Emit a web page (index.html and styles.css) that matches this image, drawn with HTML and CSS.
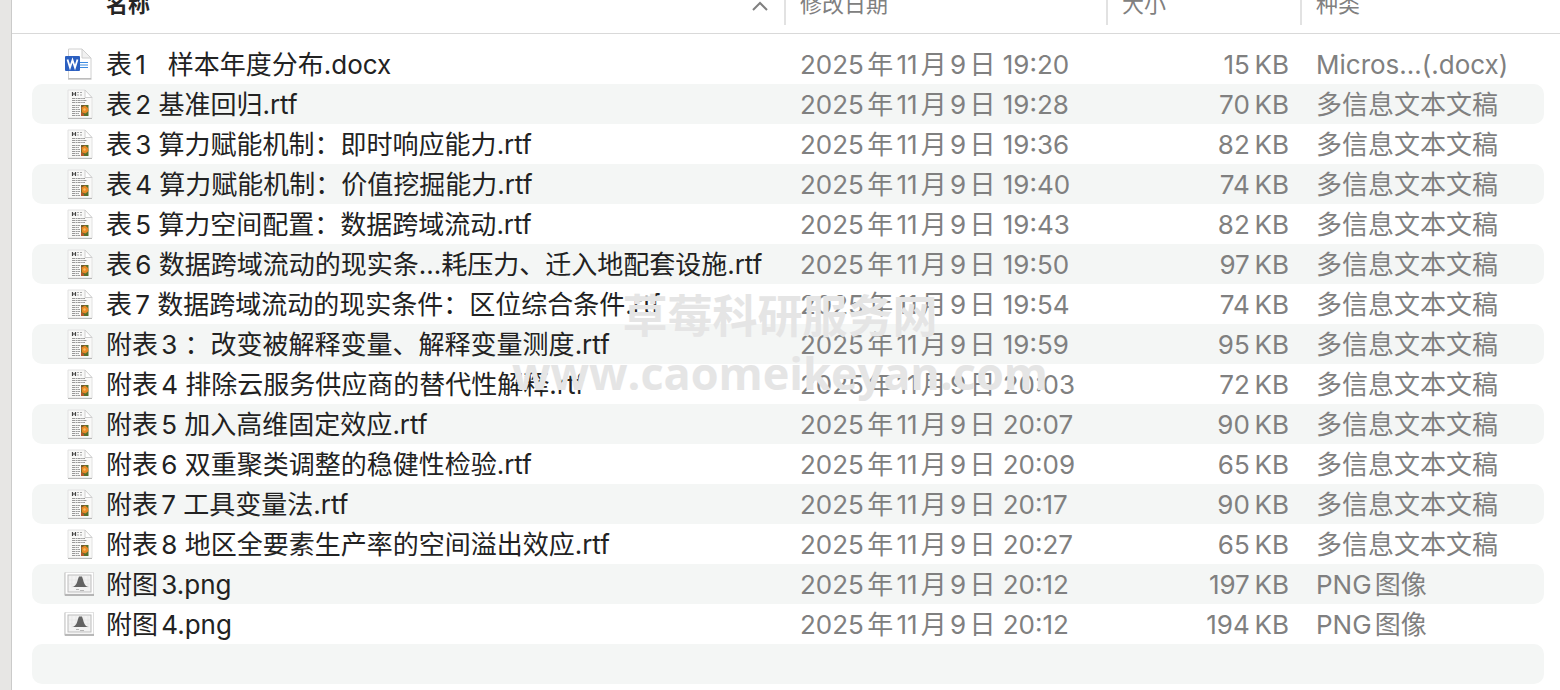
FILE: index.html
```
<!DOCTYPE html>
<html lang="zh-CN">
<head>
  <meta charset="UTF-8">
  <title>文件列表</title>
  <meta name="viewport" content="width=device-width, initial-scale=1.0">
  <link rel="stylesheet" href="styles.css">
</head>
<body>
  <svg class="sprite" aria-hidden="true">
    <symbol id="icon-word" viewBox="0 0 30 32">
      <path d="M4.5 1h13.500l9 9v20.500H4.500z" fill="#fff" stroke="#d0d0d0"/>
      <path d="M4 31h23.500" stroke="#aaa"/>
      <path d="M18 1v9h9z" fill="#f1f1f1" stroke="#cfcfcf"/>
      <path d="M15 14.500h9M15 17h9M15 19.500h9" stroke="#3c8be0"/>
      <rect x="1" y="8" width="15" height="15" rx="1" fill="#2b5fc0"/>
      <path d="M3.500 11.500L6 19.500L8.500 12L11 19.500L13.500 11.500" fill="none" stroke="#fff" stroke-width="1.800"/>
    </symbol>
    <symbol id="icon-rtf" viewBox="0 0 30 32">
      <path d="M4 2h17l7 7.500v20.500H4z" fill="#f9f9f8" stroke="#e2e2e2"/>
      <path d="M4 30.500h24" stroke="#b9b9b9"/>
      <path d="M8.500 4v4M11.500 4v4M8.500 6h3" stroke="#444" stroke-width="1.200"/>
      <path d="M13 4.500h6M13 7h6" stroke="#a5a5a5" stroke-dasharray="2 1"/>
      <path d="M8 10.500h13M8 12.500h15M8 14.500h13" stroke="#999" stroke-width="1.200" stroke-dasharray="3 .6 1.500 .5"/>
      <path d="M8 17.500h8M8 19.500h7M8 21.500h8M8 23.500h8M8 25.500h7M8 27.500h8" stroke="#999" stroke-width="1.200" stroke-dasharray="3 .6 2 .5"/>
      <path d="M21 2v7.500h7z" fill="#fff" stroke="#cfcfcf"/>
      <rect x="17" y="17" width="7.500" height="11" fill="#54702d"/>
      <path d="M17 17h4l-2 5-2 1z" fill="#6b5a2c"/>
      <path d="M17.500 19.500l3.500-2 3 2.500 .5 3-3 2.500-3.500-1z" fill="#e88928"/>
      <path d="M20 20l2 1-1 2-2-1z" fill="#f4c05a"/>
      <path d="M17 24l3 2v2h-3z" fill="#b6592c"/>
    </symbol>
    <symbol id="icon-png" viewBox="0 0 30 32">
      <rect x="0" y="4.500" width="30.500" height="23" fill="#b4b4b4" opacity=".5"/>
      <path d="M1 27h29" stroke="#858585"/>
      <rect x="1.500" y="4.500" width="28" height="21.500" fill="#fff" stroke="#d2d2d2" stroke-width=".5"/>
      <rect x="4" y="7" width="23" height="17" fill="#f2f2f2" stroke="#bcbcbc"/>
      <path d="M8 8v12M12 8v12M20 8v12M24 8v12M5 12h21M5 16h21" stroke="#e2e2e2" stroke-width=".6"/>
      <path d="M8 19c4-.5 5-4 6-8l1-2.500h3l1 3c1 4 2 7 6 7.500z" fill="#636363"/>
      <path d="M12 21.500h3M16 22.500h4" stroke="#b5b5b5"/>
    </symbol>
  </svg>

  <main class="window">
    <table class="files">
      <colgroup>
        <col>
        <col class="col-date">
        <col class="col-size">
        <col class="col-kind">
      </colgroup>
      <thead>
        <tr>
          <th class="sorted" aria-sort="ascending">
            <div class="head-name">
              <span>名称</span>
              <svg class="chevron" viewBox="0 0 16 10"><path d="M1 9l7-7 7 7"/></svg>
            </div>
          </th>
          <th><div class="head">修改日期</div></th>
          <th><div class="head">大小</div></th>
          <th><div class="head">种类</div></th>
        </tr>
      </thead>
      <tbody>
        <tr><td class="name"><svg class="icon"><use href="#icon-word"/></svg>表1&nbsp;&nbsp; 样本年度分布<span class="ext">.docx</span></td><td>2025年11月9日 19:20</td><td class="size">15&thinsp;KB</td><td>Micros…(.docx)</td></tr>
        <tr><td class="name"><svg class="icon"><use href="#icon-rtf"/></svg>表2 基准回归<span class="ext">.rtf</span></td><td>2025年11月9日 19:28</td><td class="size">70&thinsp;KB</td><td>多信息文本文稿</td></tr>
        <tr><td class="name"><svg class="icon"><use href="#icon-rtf"/></svg>表3 算力赋能机制：即时响应能力<span class="ext">.rtf</span></td><td>2025年11月9日 19:36</td><td class="size">82&thinsp;KB</td><td>多信息文本文稿</td></tr>
        <tr><td class="name"><svg class="icon"><use href="#icon-rtf"/></svg>表4 算力赋能机制：价值挖掘能力<span class="ext">.rtf</span></td><td>2025年11月9日 19:40</td><td class="size">74&thinsp;KB</td><td>多信息文本文稿</td></tr>
        <tr><td class="name"><svg class="icon"><use href="#icon-rtf"/></svg>表5 算力空间配置：数据跨域流动<span class="ext">.rtf</span></td><td>2025年11月9日 19:43</td><td class="size">82&thinsp;KB</td><td>多信息文本文稿</td></tr>
        <tr><td class="name"><svg class="icon"><use href="#icon-rtf"/></svg>表6 数据跨域流动的现实条…耗压力、迁入地配套设施<span class="ext">.rtf</span></td><td>2025年11月9日 19:50</td><td class="size">97&thinsp;KB</td><td>多信息文本文稿</td></tr>
        <tr><td class="name"><svg class="icon"><use href="#icon-rtf"/></svg>表7 数据跨域流动的现实条件：区位综合条件<span class="ext">.rtf</span></td><td>2025年11月9日 19:54</td><td class="size">74&thinsp;KB</td><td>多信息文本文稿</td></tr>
        <tr><td class="name"><svg class="icon"><use href="#icon-rtf"/></svg>附表3 ：改变被解释变量、解释变量测度<span class="ext">.rtf</span></td><td>2025年11月9日 19:59</td><td class="size">95&thinsp;KB</td><td>多信息文本文稿</td></tr>
        <tr><td class="name"><svg class="icon"><use href="#icon-rtf"/></svg>附表4 排除云服务供应商的替代性解释<span class="ext">.rtf</span></td><td>2025年11月9日 20:03</td><td class="size">72&thinsp;KB</td><td>多信息文本文稿</td></tr>
        <tr><td class="name"><svg class="icon"><use href="#icon-rtf"/></svg>附表5 加入高维固定效应<span class="ext">.rtf</span></td><td>2025年11月9日 20:07</td><td class="size">90&thinsp;KB</td><td>多信息文本文稿</td></tr>
        <tr><td class="name"><svg class="icon"><use href="#icon-rtf"/></svg>附表6 双重聚类调整的稳健性检验<span class="ext">.rtf</span></td><td>2025年11月9日 20:09</td><td class="size">65&thinsp;KB</td><td>多信息文本文稿</td></tr>
        <tr><td class="name"><svg class="icon"><use href="#icon-rtf"/></svg>附表7 工具变量法<span class="ext">.rtf</span></td><td>2025年11月9日 20:17</td><td class="size">90&thinsp;KB</td><td>多信息文本文稿</td></tr>
        <tr><td class="name"><svg class="icon"><use href="#icon-rtf"/></svg>附表8 地区全要素生产率的空间溢出效应<span class="ext">.rtf</span></td><td>2025年11月9日 20:27</td><td class="size">65&thinsp;KB</td><td>多信息文本文稿</td></tr>
        <tr><td class="name"><svg class="icon"><use href="#icon-png"/></svg>附图3<span class="ext">.png</span></td><td>2025年11月9日 20:12</td><td class="size">197&thinsp;KB</td><td>PNG图像</td></tr>
        <tr><td class="name"><svg class="icon"><use href="#icon-png"/></svg>附图4<span class="ext">.png</span></td><td>2025年11月9日 20:12</td><td class="size">194&thinsp;KB</td><td>PNG图像</td></tr>
        <tr><td></td><td></td><td></td><td></td></tr>
      </tbody>
    </table>
  </main>
  <div class="watermark">
    <div>草莓科研服务网</div>
    <div>www.caomeikeyan.com</div>
  </div>
</body>
</html>
```

FILE: styles.css
```
html, body {
  margin: 0;
  padding: 0;
  height: 100%;
  overflow: hidden;
}
body {
  background: #e7e6e4;
  color: #262626;
  font-family: Inter, 'Noto Sans CJK SC', sans-serif;
  font-size: 26px;
  text-autospace: normal;
}
.sprite {
  display: none;
}
.window {
  box-sizing: border-box;
  min-height: 100%;
  margin-left: 11px;
  padding: 0 16px 0 20px;
  border-left: 1px solid #cbcbca;
  background: #fff;
  overflow: hidden;
}

/* file list, scrolled so that the header is partly off the top */
.files {
  width: 100%;
  margin-top: -23px;
  border-spacing: 0;
  table-layout: fixed;
}
.col-date {
  width: 322px;
}
.col-size {
  width: 194px;
}
.col-kind {
  width: 244px;
}
thead tr {
  position: relative;
}
/* header rule runs past the table to both window edges */
.sorted::after {
  content: '';
  position: absolute;
  left: -20px;
  right: -16px;
  bottom: 0;
  height: 1px;
  background: #d9d9d9;
}
th {
  height: 57px;
  padding: 0;
  color: #808080;
  font-size: 22px;
  font-weight: 400;
  text-align: left;
}
th.sorted {
  color: #262626;
  font-weight: 700;
}
.head {
  height: 38px;
  line-height: 34px;
  padding-left: 14px;
  border-left: 2px solid #e2e2e2;
}
.head-name {
  display: flex;
  justify-content: space-between;
  height: 38px;
  line-height: 34px;
  padding: 0 16px 0 74px;
}
.chevron {
  align-self: center;
  width: 16px;
  height: 10px;
  fill: none;
  stroke: #808080;
  stroke-width: 2;
}
tbody::before {
  content: '';
  display: table-row;
  height: 10px;
}
td {
  height: 38px;
  padding: 2px 0 0 16px;
  line-height: 38px;
  color: #808080;
  white-space: nowrap;
}
tbody tr:nth-child(even) td {
  background: #f4f6f5;
}
td:first-child {
  border-radius: 10px 0 0 10px;
}
td:last-child {
  border-radius: 0 10px 10px 0;
}
.name {
  padding-left: 32px;
  color: #222;
}
.ext {
  text-autospace: no-autospace;
}
.icon {
  width: 30px;
  height: 32px;
  margin: 2px 12px 0 0;
  vertical-align: top;
}
.size {
  padding-right: 11px;
  text-align: right;
}

.watermark {
  position: absolute;
  top: 287px;
  left: 0;
  right: 0;
  color: #e5e5e5;
  font-family: 'Open Sans', 'Noto Sans CJK SC', sans-serif;
  font-size: 45px;
  font-weight: 700;
  line-height: 57px;
  text-align: center;
  pointer-events: none;
}
```
